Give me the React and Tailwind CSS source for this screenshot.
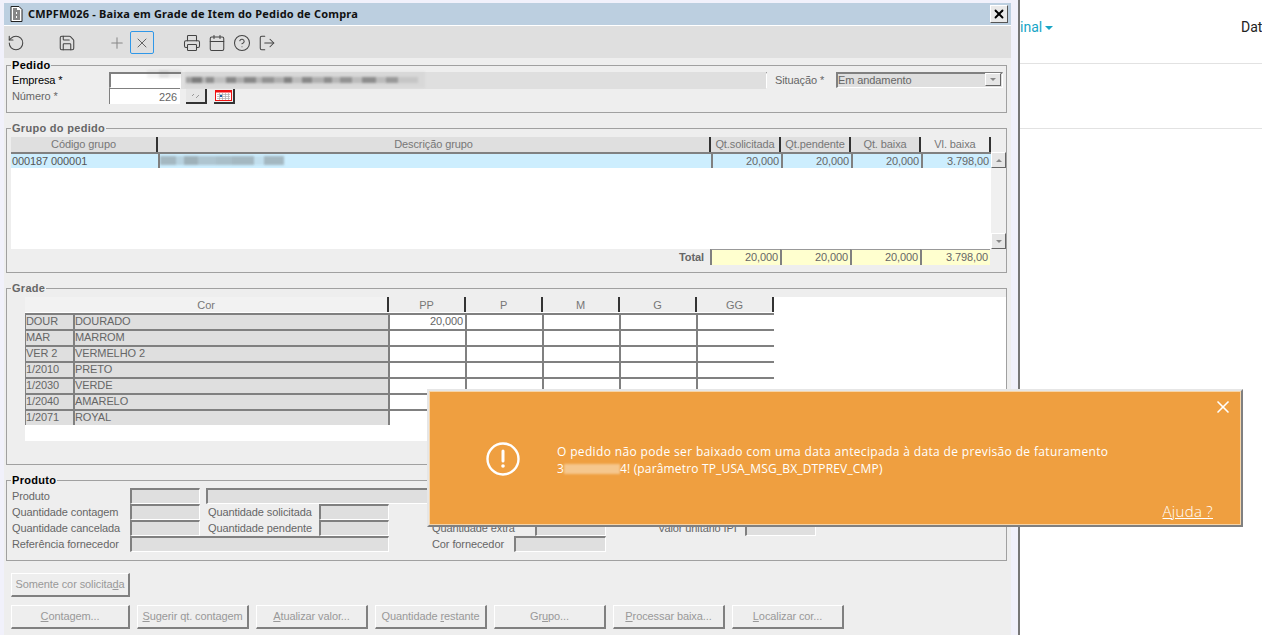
import React from 'react';
import { RotateCcw, Save, Plus, X, Printer, Calendar, CircleHelp, LogOut } from 'lucide-react';

const sans = 'font-["Liberation_Sans",Arial,sans-serif] tracking-[-0.1px]';

// blurred chunks that stand in for the censored text
const Mosaic = ({ items, className = '' }) => (
    <div className={`flex items-center blur-[1px] ${className}`}>
        {items.map((w, i) => (
            <span key={i} style={{ width: w[0], opacity: w[1] }} className="h-full shrink-0 bg-[#666]" />
        ))}
    </div>
);

const Fieldset = ({ title, strong, className, children }) => (
    <fieldset className={`ml-[2px] mr-[4px] border border-[#a0a0a0] ${className}`}>
        <legend className={`ml-[4px] px-px text-[11px] leading-[12px] font-bold tracking-[0.3px] ${strong ? 'text-black' : 'text-[#666]'}`}>{title}</legend>
        {children}
    </fieldset>
);

const Input = ({ className = '', children }) => (
    <div className={`h-[16px] shrink-0 border-l-2 border-t-2 border-[#808080] border-r border-b border-r-white border-b-white bg-[#dfdfdf] ${className}`}>{children}</div>
);

const Label = ({ className = '', children }) => (
    <span className={`shrink-0 text-[11px] leading-[16px] text-[#666] ${className}`}>{children}</span>
);

const HeadCell = ({ className = '', children }) => (
    <div className={`flex h-[15px] shrink-0 items-center justify-center border-r-2 border-[#333] text-[11px] text-[#777] ${className}`}>{children}</div>
);

const NumCell = ({ className = '', children }) => (
    <div className={`h-full shrink-0 border-l-2 border-[#808080] pr-[2px] text-right text-[11px] leading-[15px] text-[#666] ${className}`}>{children}</div>
);

const GradeRow = ({ code, name, value }) => (
    <div className="flex h-[16px] w-[749px] shrink-0 border-t-2 border-[#808080] text-[11px] leading-[12px] text-[#666]">
        <div className="w-[48px] shrink-0 border-l border-[#808080] bg-[#dfdfdf]">{code}</div>
        <div className="w-[315px] shrink-0 border-l-2 border-[#808080] bg-[#dfdfdf]">{name}</div>
        {[0, 1, 2, 3, 4].map(i => (
            <div key={i} className="w-[77px] shrink-0 border-l-2 border-[#808080] bg-white pr-[2px] text-right">{i === 0 ? value : ''}</div>
        ))}
    </div>
);

const Btn = ({ width, children }) => (
    <button className={`flex h-[24px] shrink-0 items-center justify-center border border-t-white border-l-white border-r-2 border-b-2 border-r-[#808080] border-b-[#808080] bg-[#eee] text-[11px] text-[#999] ${width}`}>{children}</button>
);

const ToolIcon = ({ icon: Icon, className = '' }) => (
    <Icon size={18} strokeWidth={1.4} className={`shrink-0 text-[#444] ${className}`} />
);

const ArrowButton = ({ up, className = '' }) => (
    <span className={`flex items-center justify-center border border-t-white border-l-white border-r-[#666] border-b-[#666] bg-[#e6e6e6] ${className}`}>
        <span className={`border-x-[3px] border-x-transparent ${up ? 'border-b-[3px] border-b-[#888]' : 'border-t-[3px] border-t-[#888]'}`} />
    </span>
);

const colors = [
    ['DOUR', 'DOURADO', '20,000'],
    ['MAR', 'MARROM', ''],
    ['VER 2', 'VERMELHO 2', ''],
    ['1/2010', 'PRETO', ''],
    ['1/2030', 'VERDE', ''],
    ['1/2040', 'AMARELO', ''],
    ['1/2071', 'ROYAL', ''],
];

export default function App() {
    return (
        <div className={`relative flex h-[635px] w-[1262px] overflow-hidden bg-white ${sans}`}>
            {/* janela do sistema */}
            <div className="w-[1020px] shrink-0 border-r-2 border-[#777] bg-[#f1f1fb] pl-[4px] pr-[7px] pt-[3px]">
                <div className="flex h-[23px] items-center border-b border-white bg-[#bccfe0] pl-[6px] pr-[3px]">
                    <svg width="13" height="16" viewBox="0 0 13 16" className="shrink-0">
                        <path d="M1 .5h8l3 3v12H1z" fill="#fff" stroke="#222" />
                        <path d="M3 3h4M3 5h7M3 7h3M7 7h3M3 9h7M3 11h3M7 11h3M3 13h7" stroke="#111" strokeWidth="1.2" />
                    </svg>
                    <span className='ml-[5px] font-["Noto_Sans",sans-serif] text-[11px] font-bold tracking-[0.2px] text-[#111]'>CMPFM026 - Baixa em Grade de Item do Pedido de Compra</span>
                    <div className="ml-auto flex h-[18px] w-[18px] items-center justify-center border border-t-white border-l-white border-r-[#555] border-b-[#555] bg-[#e9e9e9]">
                        <X size={14} strokeWidth={3.2} className="text-black" />
                    </div>
                </div>
                <div className="flex h-[32px] items-center bg-[#dfdfdf] pl-[3px] pt-[1px]">
                    <ToolIcon icon={RotateCcw} />
                    <ToolIcon icon={Save} className="ml-[33px]" />
                    <ToolIcon icon={Plus} className="ml-[32px] text-[#888]" />
                    <div className="ml-[4px] flex h-[23px] w-[24px] items-center justify-center rounded-[2px] border border-[#2f97e8]">
                        <X size={16} strokeWidth={1.2} className="text-[#444]" />
                    </div>
                    <ToolIcon icon={Printer} className="ml-[29px]" />
                    <ToolIcon icon={Calendar} className="ml-[7px]" />
                    <ToolIcon icon={CircleHelp} className="ml-[7px]" />
                    <ToolIcon icon={LogOut} className="ml-[7px]" />
                </div>

                <div className="h-[577px] bg-[#eee] pt-px">
                    <Fieldset title="Pedido" strong className="h-[54px]">
                        <div className="pl-[5px] pr-[3px] pt-px">
                            <div className="flex h-[16px]">
                                <Label className="w-[97px] text-black">Empresa *</Label>
                                <Input className="relative w-[658px] bg-white!">
                                    <div className="absolute inset-y-[-2px] left-[70px] right-0 bg-[#dfdfdf]" />
                                    <Mosaic className="absolute left-[36px] top-[-4px] h-[8px]" items={[[12, .08], [10, .2], [12, .12]]} />
                                    <Mosaic className="absolute left-[74px] top-[-3px] h-[17px] opacity-70" items={[[240, .08]]} />
                                    <Mosaic className="absolute left-[75px] top-[3px] h-[6px]" items={[[6, .5], [10, .8], [4, .3], [8, .65], [12, .2], [10, .7], [8, .35], [12, .7], [6, .3], [12, .6], [10, .35], [8, .75], [10, .25], [10, .7], [12, .35], [8, .65], [8, .3], [12, .6], [10, .25], [14, .65], [10, .25], [12, .55], [20, .15]]} />
                                </Input>
                                <Label className="ml-[8px] w-[61px]">Situação *</Label>
                                <Input className="flex w-[167px] items-center justify-between pb-[2px] text-[11px] leading-[12px] text-[#666]">
                                    Em andamento
                                    <ArrowButton className="mr-px h-[13px] w-[16px]" />
                                </Input>
                            </div>
                            <div className="flex h-[16px]">
                                <Label className="w-[97px]">Número *</Label>
                                <div className="h-[16px] w-[71px] shrink-0 border-l border-t border-[#808080] bg-white pr-[3px] text-right text-[11px] leading-[16px] text-[#666]">226</div>
                                <div className="ml-[6px] flex h-[16px] w-[21px] items-center justify-center border-r-2 border-b-2 border-[#333] bg-[#e6e6e6]">
                                    <svg width="9" height="7" viewBox="0 0 9 7">
                                        <path d="M1 4l2-2M5 6l3-3M6 1h.01" stroke="#999" strokeWidth="1" fill="none" />
                                    </svg>
                                </div>
                                <div className="ml-[7px] flex h-[16px] w-[21px] items-center justify-center border-r-2 border-b-2 border-[#333] bg-[#eee]">
                                    <svg width="17" height="11" viewBox="0 0 17 11">
                                        <rect x=".5" y=".5" width="16" height="10" fill="#fff" stroke="#e11" />
                                        <rect x="0" y="0" width="17" height="2.5" fill="#e11" />
                                        <path d="M2 4.5h13M2 6.5h13M2 8.5h13M4.5 3v7M7.5 3v7M10.5 3v7M13.5 3v7" stroke="#aaa" strokeWidth=".7" />
                                        <rect x="5" y="5" width="2" height="2" fill="#1a5fa8" />
                                    </svg>
                                </div>
                            </div>
                        </div>
                    </Fieldset>

                    <Fieldset title="Grupo do pedido" className="mt-[9px] h-[151px]">
                        <div className="pl-[4px] pt-[3px]">
                            <div className="flex h-[15px] w-[980px]">
                                <HeadCell className="w-[147px] bg-[#dfdfdf]">Código grupo</HeadCell>
                                <HeadCell className="w-[553px] bg-[#dfdfdf]">Descrição grupo</HeadCell>
                                <HeadCell className="w-[70px] bg-[#dfdfdf]">Qt.solicitada</HeadCell>
                                <HeadCell className="w-[70px] bg-[#dfdfdf]">Qt.pendente</HeadCell>
                                <HeadCell className="w-[70px] bg-[#dfdfdf]">Qt. baixa</HeadCell>
                                <HeadCell className="w-[70px] bg-[#eee]">Vl. baixa</HeadCell>
                            </div>
                            <div className="flex">
                                <div className="h-[97px] w-[980px] shrink-0 bg-white">
                                    <div className="flex h-[16px] border-t-2 border-[#808080] bg-[#cdeefe]">
                                        <div className="w-[147px] shrink-0 pl-px text-[11px] leading-[15px] text-[#555]">000187 000001</div>
                                        <div className="relative w-[553px] shrink-0 border-l-2 border-[#808080]">
                                            <Mosaic className="absolute left-0 top-[2px] h-[9px]" items={[[16, .4], [8, .2], [14, .45], [18, .3], [16, .35], [22, .4], [10, .1], [20, .4]]} />
                                        </div>
                                        <NumCell className="w-[70px]">20,000</NumCell>
                                        <NumCell className="w-[70px]">20,000</NumCell>
                                        <NumCell className="w-[70px]">20,000</NumCell>
                                        <NumCell className="w-[70px]">3.798,00</NumCell>
                                    </div>
                                </div>
                                <div className="flex h-[97px] w-[15px] shrink-0 flex-col justify-between bg-[#f0f0f0]">
                                    <ArrowButton up className="h-[16px]" />
                                    <ArrowButton className="h-[16px]" />
                                </div>
                            </div>
                            <div className="flex h-[16px] w-[980px]">
                                <span className="w-[699px] shrink-0 pr-[6px] text-right text-[11px] font-bold leading-[16px] text-[#666]">Total</span>
                                {['20,000', '20,000', '20,000', '3.798,00'].map((v, i) => (
                                    <div key={i} className="w-[70px] shrink-0 border-l-2 border-t border-[#999] border-l-[#808080] bg-[#ffffcf] pr-[2px] text-right text-[11px] leading-[15px] text-[#666]">{v}</div>
                                ))}
                            </div>
                        </div>
                    </Fieldset>

                    <Fieldset title="Grade" className="mt-[9px] h-[183px]">
                        <div className="ml-[18px] mt-[3px] flex h-[144px] flex-col bg-white">
                            <div className="flex h-[16px] w-[749px] shrink-0">
                                <HeadCell className="w-[364px] bg-[#f2f2f2] pt-[2px]">Cor</HeadCell>
                                {['PP', 'P', 'M', 'G', 'GG'].map(h => (
                                    <HeadCell key={h} className="w-[77px] bg-[#eee] pt-[2px]">{h}</HeadCell>
                                ))}
                            </div>
                            {colors.map(c => <GradeRow key={c[0]} code={c[0]} name={c[1]} value={c[2]} />)}
                        </div>
                    </Fieldset>

                    <Fieldset title="Produto" strong className="mt-[9px] h-[87px]">
                        <div className="pl-[5px] pt-[2px]">
                            <div className="flex h-[16px]">
                                <Label className="w-[118px]">Produto</Label>
                                <Input className="w-[70px]" />
                                <Input className="ml-[6px] w-[400px]" />
                            </div>
                            <div className="flex h-[16px]">
                                <Label className="w-[118px]">Quantidade contagem</Label>
                                <Input className="w-[70px]" />
                                <Label className="ml-[8px] w-[111px]">Quantidade solicitada</Label>
                                <Input className="w-[70px]" />
                            </div>
                            <div className="flex h-[16px]">
                                <Label className="w-[118px]">Quantidade cancelada</Label>
                                <Input className="w-[70px]" />
                                <Label className="ml-[8px] w-[111px]">Quantidade pendente</Label>
                                <Input className="w-[70px]" />
                                <Label className="ml-[43px] w-[103px]">Quantidade extra</Label>
                                <Input className="w-[71px]" />
                                <Label className="ml-[52px] w-[87px]">Valor unitário IPI</Label>
                                <Input className="w-[71px]" />
                            </div>
                            <div className="flex h-[16px]">
                                <Label className="w-[118px]">Referência fornecedor</Label>
                                <Input className="w-[259px]" />
                                <Label className="ml-[43px] w-[82px]">Cor fornecedor</Label>
                                <Input className="w-[92px]" />
                            </div>
                        </div>
                    </Fieldset>

                    <div className="pl-[7px] pt-[12px]">
                        <Btn width="w-[119px]"><span>Somente cor solicita<u>d</u>a</span></Btn>
                        <div className="mt-[8px] flex gap-[7px]">
                            <Btn width="w-[119px]"><span><u>C</u>ontagem...</span></Btn>
                            <Btn width="w-[112px]"><span><u>S</u>ugerir qt. contagem</span></Btn>
                            <Btn width="w-[112px]"><span><u>A</u>tualizar valor...</span></Btn>
                            <Btn width="w-[112px]"><span>Quantidade <u>r</u>estante</span></Btn>
                            <Btn width="w-[112px]"><span>Gr<u>u</u>po...</span></Btn>
                            <Btn width="w-[112px]"><span><u>P</u>rocessar baixa...</span></Btn>
                            <Btn width="w-[112px]"><span><u>L</u>ocalizar cor...</span></Btn>
                        </div>
                    </div>
                </div>
            </div>

            {/* pagina por tras da janela */}
            <div className='flex-1 font-["Roboto",sans-serif] text-[14px] tracking-normal'>
                <div className="flex h-[64px] items-start justify-between border-b border-[#e2e2e2] pt-[17px]">
                    <span className="flex items-center text-[#17a5c6]">inal<span className="ml-[3px] border-x-[4px] border-t-[4px] border-x-transparent border-t-[#17a5c6]" /></span>
                    <span className="w-[21px] text-[#222]">Dat</span>
                </div>
                <div className="h-[65px] border-b border-[#e2e2e2]" />
            </div>

            {/* aviso */}
            <div className="absolute left-[427px] top-[389px] h-[138px] w-[816px] border-2 border-[#e6e6e6] border-r-[#808080] border-b-[#808080] bg-[#ef9f40] text-white">
                <div className="relative h-full border border-[#f7d5a8]">
                    <X size={20} strokeWidth={2} className="absolute right-[7px] top-[5px]" />
                    <div className='absolute left-[56px] top-[50px] flex w-[720px] items-start font-["Open_Sans",sans-serif] text-[12px] leading-[17px]'>
                        <svg width="34" height="34" viewBox="0 0 34 34" className="shrink-0">
                            <circle cx="17" cy="17" r="15.5" fill="none" stroke="#fff" strokeWidth="2.4" />
                            <path d="M17 9v10" stroke="#fff" strokeWidth="3" strokeLinecap="round" />
                            <circle cx="17" cy="24" r="1.8" fill="#fff" />
                        </svg>
                        <div className="ml-[37px] mt-px">
                            <p className="tracking-[0.35px]">O pedido não pode ser baixado com uma data antecipada à data de previsão de faturamento</p>
                            <p className="flex items-center whitespace-pre tracking-[0.16px]">3<span className="h-[10px] w-[56px] bg-[#f5c78e] blur-[1px]" />4! (parâmetro TP_USA_MSG_BX_DTPREV_CMP)</p>
                        </div>
                    </div>
                    <a className='absolute bottom-[2px] right-[27px] font-["Open_Sans",sans-serif] text-[15px] font-light tracking-[0.3px] underline'>Ajuda ?</a>
                </div>
            </div>
        </div>
    );
}
